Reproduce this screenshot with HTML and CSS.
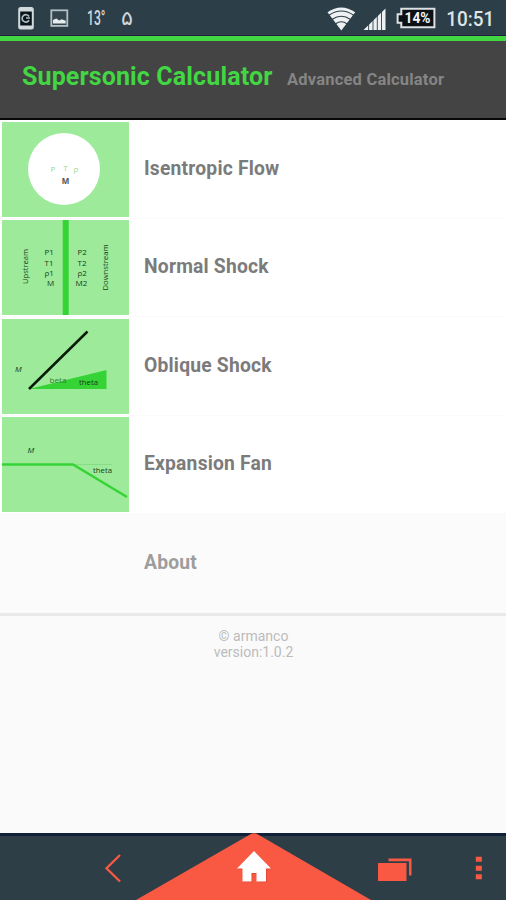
FILE: index.html
```html
<!DOCTYPE html>
<html lang="en">
<head>
<meta charset="utf-8">
<title>Supersonic Calculator</title>
<link rel="stylesheet" href="styles.css">
</head>
<body>
<div class="status">
  <svg class="status-art" viewBox="0 0 506 35">
    <rect x="19.2" y="8" width="13.6" height="20.5" rx="1.5" fill="#09151b" stroke="#d2dade" stroke-width="2"/>
    <path d="M20 10.3H32M20 26.7H32" stroke="#d2dade" stroke-width="2.6"/>
    <path d="M29 16.5A3.7 3.7 0 1 0 29 20.3M26 18h4" fill="none" stroke="#aebbc1" stroke-width="1.7"/>
    <rect x="51.3" y="10.3" width="16" height="15.6" fill="#35464f" stroke="#b4c0c6" stroke-width="1.8"/>
    <path d="M53 23.5v-3.5l3.3-1.5 3 2 2.4-1.3 4 1.6V23.5z" fill="#e7ecef"/>
    <text class="st-temp" x="87" y="25.2" textLength="18.5" lengthAdjust="spacingAndGlyphs">13°</text>
    <text class="st-digit" x="121" y="25" textLength="12" lengthAdjust="spacingAndGlyphs">۵</text>
    <path d="M341.3 30.5L327.5 12.3Q341.3 2.5 355.2 12.3z" fill="#eef1f2"/>
    <path d="M329 15.3Q341.3 6.7 353.7 15.3M332 19.5Q341.3 13 350.6 19.5M335.4 24Q341.3 19.5 347.2 24" fill="none" stroke="#2c3e47" stroke-width="1.1"/>
    <path d="M363.5 30L385.5 8.5V30z" fill="#eef1f2"/>
    <path d="M368.6 23v7M373 18v12M377.3 14v16M381.5 10v20" stroke="#2c3e47" stroke-width=".9"/>
    <path d="M401.3 8.8H434.4V27.3H401.3V22.7H397.6V14.2H401.3z" fill="#0b1115" stroke="#dce1e3" stroke-width="2"/>
    <text class="st-battery" x="404.5" y="23.2" textLength="26" lengthAdjust="spacingAndGlyphs">14%</text>
    <text class="st-clock" x="446.3" y="26" textLength="48" lengthAdjust="spacingAndGlyphs">10:51</text>
  </svg>
</div>
<header class="header">
  <h1 class="title">Supersonic Calculator</h1>
  <span class="subtitle">Advanced Calculator</span>
</header>
<main class="list">
  <div class="row">
    <svg class="tile" viewBox="0 0 127 95">
      <circle cx="62" cy="47" r="36" fill="#fff"/>
      <g class="tile-text faint"><text x="48.5" y="49.5">P</text><text x="61.3" y="49">T</text><text x="71.5" y="49.5">ρ</text></g>
      <text class="tile-text gray" x="59.7" y="62">M</text>
    </svg>
    <span class="label">Isentropic Flow</span>
  </div>
  <div class="row">
    <svg class="tile" viewBox="0 0 127 95">
      <path d="M63.7 0v95" stroke="#36d336" stroke-width="6"/>
      <g class="tile-text">
        <text transform="translate(26 64) rotate(-90)" textLength="35" lengthAdjust="spacingAndGlyphs">Upstream</text>
        <text x="42.5" y="35">P1</text><text x="42.5" y="45.5">T1</text><text x="42.5" y="56">ρ1</text><text x="45" y="66.3">M</text>
        <text x="75.5" y="35">P2</text><text x="75.5" y="45.5">T2</text><text x="75.5" y="56">ρ2</text><text x="73.5" y="66.3">M2</text>
        <text transform="translate(105.5 70.5) rotate(-90)" textLength="46" lengthAdjust="spacingAndGlyphs">Downstream</text>
      </g>
    </svg>
    <span class="label">Normal Shock</span>
  </div>
  <div class="row">
    <svg class="tile" viewBox="0 0 127 95">
      <path d="M27 70L104.5 51V70z" fill="#36d336"/>
      <path d="M27 70L85.5 12.5" stroke="#071b07" stroke-width="2.5"/>
      <g class="tile-text"><text class="slanted" x="13" y="52.5">M</text><text class="muted" x="47.5" y="63.5" textLength="17" lengthAdjust="spacingAndGlyphs">beta</text><text x="77" y="66.3" textLength="19" lengthAdjust="spacingAndGlyphs">theta</text></g>
    </svg>
    <span class="label">Oblique Shock</span>
  </div>
  <div class="row">
    <svg class="tile" viewBox="0 0 127 95">
      <path d="M71 47.5h39" stroke="#76d576" stroke-width=".6"/>
      <path d="M0 47.5H71L125 80" fill="none" stroke="#36d336" stroke-width="2.5"/>
      <g class="tile-text"><text class="slanted" x="25.5" y="35.5">M</text><text x="91" y="55.5" textLength="19" lengthAdjust="spacingAndGlyphs">theta</text></g>
    </svg>
    <span class="label">Expansion Fan</span>
  </div>
  <div class="row about">
    <span class="blank"></span>
    <span class="label">About</span>
  </div>
</main>
<footer class="footer">
  <div class="copyright">© armanco</div>
  <div class="version">version:1.0.2</div>
</footer>
<nav class="navbar">
  <svg class="nav-art" viewBox="0 0 506 67">
    <path d="M0 0H506V3H0z" fill="#102039"/>
    <path d="M136 67L250 1.5Q254 -1 258 1.5L371 67z" fill="#f95943"/>
    <path d="M120 22L106.5 35.2L120 48.5" fill="none" stroke="#f95943" stroke-width="2.3"/>
    <path d="M254 18L271 35.5H266V48.5H256.5V40H251.5V48.5H242.5V35.5H237z" fill="#d94431" transform="translate(.7 .7)"/>
    <path d="M254 18L271 35.5H266V48.5H256.5V40H251.5V48.5H242.5V35.5H237z" fill="#fff"/>
    <path d="M378 30h28.5v18H378zM388.5 25.5H411.5V42.5H409V28.3H388.5zM475.8 23.7h6v5h-6zM475.8 32.7h6v5h-6zM475.8 41.2h6v5h-6z" fill="#f95943"/>
  </svg>
</nav>
</body>
</html>
```
FILE: styles.css
```css
* { box-sizing: border-box; }
body {
  margin: 0;
  width: 506px;
  height: 900px;
  display: flex;
  flex-direction: column;
  overflow: hidden;
  background: #fafafa;
  font-family: Roboto, "Liberation Sans", sans-serif;
}
svg { display: block; }
.status { height: 36px; background: #2c3e47; border-bottom: 1px solid #211a43; }
.status-art { width: 506px; height: 35px; }
.st-temp { font: 500 19.5px Roboto, sans-serif; fill: #cfd7da; }
.st-digit { font: 20px "DejaVu Sans", sans-serif; fill: #cfd7da; }
.st-battery { font: bold 14px Roboto, sans-serif; fill: #f4f5f5; }
.st-clock { font: 500 20px Roboto, sans-serif; fill: #dfe4e6; }
.header {
  height: 84px;
  display: flex;
  align-items: baseline;
  padding: 21px 22px 0;
  background: #444;
  border-top: 5px solid #40d740;
  border-bottom: 2px solid #080808;
}
.title { margin: 0; width: 265px; font-size: 25px; line-height: 30px; font-weight: 700; letter-spacing: .13px; color: #43d643; white-space: nowrap; }
.subtitle { font-size: 16.5px; font-weight: 700; letter-spacing: .2px; color: #858585; white-space: nowrap; }
.list {
  height: 496px;
  background: #fff;
  border-bottom: 4px solid #e9e9e9;
}
.row {
  height: 98.5px;
  display: flex;
  align-items: center;
  gap: 15px;
  padding: 1px 2px 0;
  border-bottom: 1px solid #fafafa;
}
.tile { width: 127px; height: 95px; background: #9deb9a; }
.label { position: relative; top: -1px; font-size: 19.3px; font-weight: 700; letter-spacing: .2px; color: #7b7b7b; }
.about { background: #fbfbfb; }
.about .label { color: #9d9d9d; }
.blank { width: 127px; height: 95px; }
.tile-text { font: 8px "Open Sans", Roboto, sans-serif; fill: #173b17; }
.faint { fill: #90d990; }
.gray { fill: #555; font-weight: 700; }
.muted { fill: #347d34; }
.slanted { font-style: italic; font-weight: 500; }
.footer {
  flex: 1;
  padding-top: 13px;
  text-align: center;
  font-size: 14px;
  line-height: 15.5px;
  color: #bcbcbc;
}
.copyright, .version { width: 507px; }
.navbar { height: 67px; background: #2d3e47; }
.nav-art { width: 506px; height: 67px; }
```
